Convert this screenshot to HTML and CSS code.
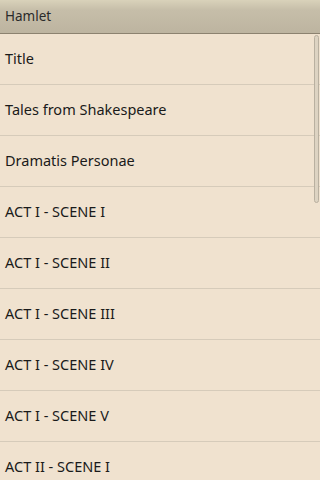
FILE: index.html
```html
<!DOCTYPE html>
<html lang="en">
<head>
    <meta charset="UTF-8">
    <meta name="viewport" content="width=device-width, initial-scale=1.0">
    <title>Hamlet</title>
    <link rel="stylesheet" href="styles.css">
</head>
<body>
    <div class="titlebar">Hamlet</div>

    <div class="listwrap">
        <ul class="chapters">
            <li>Title</li>
            <li>Tales from Shakespeare</li>
            <li>Dramatis Personae</li>
            <li>ACT I - SCENE I</li>
            <li>ACT I - SCENE II</li>
            <li>ACT I - SCENE III</li>
            <li>ACT I - SCENE IV</li>
            <li>ACT I - SCENE V</li>
            <li>ACT II - SCENE I</li>
        </ul>
        <div class="scrollthumb"></div>
    </div>
</body>
</html>
```

FILE: styles.css
```css
body {
    font-family: "Noto Sans", "DejaVu Sans", sans-serif;
    background-color: #f0e2cf;
    color: #1a1a1a;
    margin: 0;
    padding: 0;
    width: 320px;
    height: 480px;
    overflow: hidden;
}
.titlebar {
    height: 33px;
    line-height: 33px;
    padding-left: 5px;
    font-size: 13.5px;
    color: #2a2a2a;
    background: linear-gradient(#d9d2ba 0px, #c6bea9 10px, #bdb4a0 33px);
    border-bottom: 1px solid #8c8270;
}
.listwrap {
    position: relative;
}
.chapters {
    list-style: none;
    margin: 0;
    padding: 0;
}
.chapters li {
    height: 49px;
    line-height: 49px;
    padding-left: 5px;
    padding-bottom: 1px;
    font-size: 14.5px;
    border-bottom: 1px solid #d6cbba;
}
.scrollthumb {
    position: absolute;
    top: 1px;
    right: 1px;
    width: 3px;
    height: 166px;
    border: 1px solid #b9b0a0;
    border-radius: 3px;
    background-color: #ddd3c2;
}
```
